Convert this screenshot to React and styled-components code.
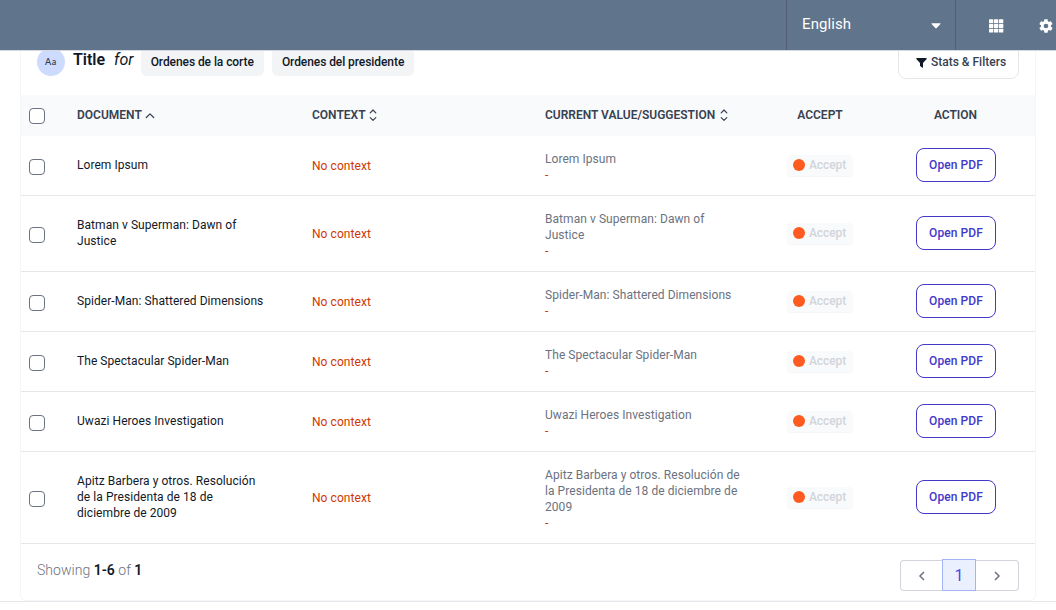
import React from "react";
import styled, { createGlobalStyle } from "styled-components";

const GlobalStyle = createGlobalStyle`
  * { box-sizing: border-box; }
  body { margin: 0; background: #fff; font-family: Roboto, "Liberation Sans", sans-serif; overflow: hidden; -webkit-font-smoothing: antialiased; }
  button { font-family: inherit; margin: 0; cursor: pointer; }
`;

const Page = styled.div`
  height: 610px;
  display: flex;
  flex-direction: column;
  overflow: hidden;
`;

const TopBar = styled.header`
  flex: none;
  height: 51px;
  display: flex;
  justify-content: flex-end;
  background: #60748b;
  border-bottom: 1px solid #d5d8de;
  color: #fff;
`;

const LanguageMenu = styled.div`
  width: 170px;
  display: flex;
  align-items: center;
  justify-content: space-between;
  padding: 0 14px 0 15px;
  border-left: 1px solid #505f73;
  border-right: 1px solid #505f73;
  font-size: 15px;
  line-height: 18px;
  letter-spacing: 0.1px;
  span { padding-bottom: 2px; }
  svg { margin-top: 2px; }
`;

const NavIcons = styled.nav`
  width: 100px;
  display: flex;
  align-items: center;
  padding: 2px 0 0 32px;
  gap: 34px;
  svg { flex: none; }
`;

const Content = styled.main`
  flex: none;
  height: 551px;
  padding: 0 20px;
  border-bottom: 1px solid #e5e7eb;
`;

const Card = styled.section`
  height: 550px;
  border: 1px solid #f5f6f7;
  border-top: 0;
  border-radius: 0 0 6px 6px;
  overflow: hidden;
`;

const CardHeader = styled.div`
  height: 44px;
  display: flex;
  align-items: flex-start;
  padding: 0 16px;
  overflow: hidden;
`;

const TypeBadge = styled.span`
  width: 28px;
  height: 28px;
  margin-top: -3px;
  border-radius: 50%;
  background: #cddbfe;
  display: grid;
  place-items: center;
`;

const Heading = styled.h1`
  margin: -3px 0 0 8px;
  font-size: 16px;
  line-height: 24px;
  font-weight: 600;
  color: #111827;
  em { font-weight: 400; margin-left: 5px; }
`;

const Tag = styled.span`
  height: 28px;
  margin: -3px 0 0 ${(p) => p.$gap}px;
  padding: 6px 10px;
  border-radius: 6px;
  background: #f3f4f6;
  color: #111827;
  font-size: 12px;
  line-height: 16px;
  font-weight: 500;
  letter-spacing: -0.07px;
`;

const FilterButton = styled.button`
  height: 36px;
  width: 121px;
  margin: -8px 0 0 auto;
  display: flex;
  align-items: center;
  justify-content: center;
  gap: 4px;
  padding: 2px 0 0 5px;
  border: 1px solid #e5e7eb;
  border-radius: 8px;
  background: #fff;
  color: #374151;
  font-size: 12px;
  font-weight: 500;
  svg { margin-top: 2px; }
`;

const Row = styled.div`
  display: grid;
  grid-template-columns: 56px 235px 233px 232px 84px 174px;
  border-bottom: 1px solid #e5e7eb;
`;

const HeadRow = styled(Row)`
  height: 41px;
  align-items: center;
  border: 0;
  background: #f9fafb;
  color: #374151;
  font-size: 12px;
  line-height: 16px;
  font-weight: 600;
`;

const HeadCell = styled.div`
  display: flex;
  align-items: center;
  justify-content: ${(p) => (p.$center ? "center" : "flex-start")};
  gap: ${(p) => p.$gap || 3}px;
  padding: 0 0 1px ${(p) => p.$left || 0}px;
`;

const Cell = styled.div`
  display: flex;
  align-items: center;
  justify-content: ${(p) => (p.$center ? "center" : "flex-start")};
  padding: ${(p) => p.$top || 0}px 0 ${(p) => p.$bottom || 0}px ${(p) => p.$left || 0}px;
  font-size: 12px;
  line-height: 16px;
  letter-spacing: 0.06px;
`;

const Checkbox = styled.input.attrs({ type: "checkbox" })`
  appearance: none;
  width: 16px;
  height: 16px;
  margin: 0;
  border: 1px solid #6b7280;
  border-radius: 4px;
  background: #fff;
`;

const DocumentName = styled.span`
  width: 188px;
  color: #111827;
`;

const NoContext = styled.span`
  color: #d03801;
`;

const Values = styled.div`
  width: 198px;
  padding: 15px 0 12px;
  font-size: 12px;
  line-height: 16px;
  letter-spacing: 0.06px;
  color: #6b7280;
`;

const Suggestion = styled.div`
  color: #d03801;
`;

const AcceptButton = styled.button`
  width: 66px;
  height: 21px;
  display: flex;
  align-items: center;
  gap: 4px;
  padding: 0 6px;
  border: 0;
  border-radius: 4px;
  background: #f9fafb;
  box-shadow: 0 1px 1px rgba(0, 0, 0, 0.04);
  color: #d1d5db;
  font-size: 12px;
  font-weight: 500;
  letter-spacing: -0.1px;
`;

const StatusDot = styled.i`
  flex: none;
  width: 12px;
  height: 12px;
  border-radius: 50%;
  background: #ff5a1f;
`;

const PdfButton = styled.button`
  width: 80px;
  height: 34px;
  padding: 0;
  border: 1px solid #4338ca;
  border-radius: 8px;
  background: #fff;
  color: #4338ca;
  font-size: 12px;
  line-height: 16px;
  font-weight: 500;
  letter-spacing: 0.08px;
`;

const Footer = styled.footer`
  display: flex;
  justify-content: space-between;
  padding: 16px;
`;

const Summary = styled.p`
  margin: 0;
  font-size: 14px;
  line-height: 20px;
  font-weight: 300;
  letter-spacing: 0.03px;
  color: #6b7280;
  b { font-weight: 600; color: #111827; }
`;

const Pager = styled.nav`
  display: flex;
  align-items: flex-end;
  height: 31px;
`;

const PageButton = styled.button`
  width: ${(p) => (p.$active ? 34 : p.$first ? 42 : 43)}px;
  height: ${(p) => (p.$active ? 32 : 31)}px;
  display: grid;
  place-items: center;
  padding: 0;
  border: 1px solid ${(p) => (p.$active ? "#a4b3f6" : "#d1d5db")};
  border-left-width: ${(p) => (p.$last ? 0 : 1)}px;
  border-right-width: ${(p) => (p.$first ? 0 : 1)}px;
  border-radius: ${(p) => (p.$first ? "4px 0 0 4px" : p.$last ? "0 4px 4px 0" : "0")};
  background: ${(p) => (p.$active ? "#ebf0ff" : "#fff")};
  color: ${(p) => (p.$active ? "#4f46e5" : "#6b7280")};
  font-size: 16px;
`;

const SortIcon = ({ both }) =>
  both ? (
    <svg width="10" height="14" viewBox="0 0 10 14" fill="none" stroke="currentColor" strokeWidth="1.2" strokeLinecap="round" strokeLinejoin="round">
      <path d="M2.2 4.8 5 2l2.8 2.8M2.2 9.6 5 12.4l2.8-2.8" />
    </svg>
  ) : (
    <svg width="10" height="10" viewBox="0 0 10 10" fill="none" stroke="currentColor" strokeWidth="1.2" strokeLinecap="round" strokeLinejoin="round">
      <path d="M1.3 7.5 5 3.8l3.7 3.7" />
    </svg>
  );

const BadgeText = styled.span`
  font-size: 9px;
  line-height: 10px;
  font-weight: 600;
  font-family: Lato, Roboto, sans-serif;
  letter-spacing: 0.6px;
  color: #374151;
`;

const Chevron = ({ right }) => (
  <svg width="10" height="12" viewBox="0 0 10 12" fill="none" stroke="currentColor" strokeWidth="1.5">
    <path d={right ? "M3 2l4 4-4 4" : "M7 2 3 6l4 4"} />
  </svg>
);

const documents = [
  "Lorem Ipsum",
  "Batman v Superman: Dawn of Justice",
  "Spider-Man: Shattered Dimensions",
  "The Spectacular Spider-Man",
  "Uwazi Heroes Investigation",
  "Apitz Barbera y otros. Resolución de la Presidenta de 18 de diciembre de 2009",
];

export default function App() {
  return (
    <Page>
      <GlobalStyle />
      <TopBar>
        <LanguageMenu>
          <span>English</span>
          <svg width="10" height="6" viewBox="0 0 10 6"><path d="M1 .3h8q.9 0 .4.7L5.7 5.1q-.7.7-1.4 0L.6 1Q.1.3 1 .3Z" fill="#fff" /></svg>
        </LanguageMenu>
        <NavIcons>
          <svg width="16" height="14" viewBox="0 0 16 14" fill="#fff">
            {[0, 4.7, 9.4].map((y) => [1, 6, 11].map((x) => <rect key={`${x}-${y}`} x={x} y={y + 0.3} width="4.3" height="3.9" rx=".5" />))}
          </svg>
          <svg width="16" height="16" viewBox="0 0 24 24" fill="#fff">
            <path d="M19.4 13c0-.3.1-.6.1-1s0-.7-.1-1l2.1-1.7c.2-.2.3-.4.1-.7l-2-3.400c-.1-.2-.4-.3-.6-.2l-2.500 1c-.5-.4-1.100-.7-1.700-1L14.400 2.400c0-.2-.2-.4-.5-.4h-4c-.2 0-.4.2-.5.4L9.100 5c-.6.300-1.200.6-1.700 1L4.900 5c-.2-.1-.5 0-.6.2l-2 3.400c-.1.2-.1.5.1.7L4.500 11c0 .3-.1.600-.1 1s0 .7.1 1l-2.100 1.700c-.2.200-.2.400-.1.700l2 3.400c.1.200.4.300.6.200l2.500-1c.5.400 1.100.7 1.700 1l.4 2.600c0 .2.200.4.500.4h4c.2 0 .4-.2.5-.4l.4-2.600c.6-.300 1.200-.6 1.700-1l2.500 1c.2.100.5 0 .6-.2l2-3.400c.1-.2.1-.5-.1-.7L19.400 13ZM12 15.500a3.500 3.500 0 1 1 0-7 3.500 3.500 0 0 1 0 7Z" />
          </svg>
        </NavIcons>
      </TopBar>
      <Content>
        <Card>
          <CardHeader>
            <TypeBadge><BadgeText>Aa</BadgeText></TypeBadge>
            <Heading>Title <em>for</em></Heading>
            <Tag $gap={7}>Ordenes de la corte</Tag>
            <Tag $gap={8}>Ordenes del presidente</Tag>
            <FilterButton>
              <svg width="11" height="10" viewBox="0 0 11 10" fill="#111827"><path d="M1 0h9q1 0 .7 1L7 5v5L4 8V5L.3 1Q0 0 1 0Z" /></svg>
              Stats &amp; Filters
            </FilterButton>
          </CardHeader>
          <HeadRow>
            <Cell $top={1} $left={8}><Checkbox aria-label="Select all" /></Cell>
            <HeadCell>DOCUMENT<SortIcon /></HeadCell>
            <HeadCell $gap={2}>CONTEXT<SortIcon both /></HeadCell>
            <HeadCell $gap={4}>CURRENT VALUE/SUGGESTION<SortIcon both /></HeadCell>
            <HeadCell $center $left={2}>ACCEPT</HeadCell>
            <HeadCell $center $left={15}>ACTION</HeadCell>
          </HeadRow>
          {documents.map((name) => (
            <Row key={name}>
              <Cell $top={3} $left={8}><Checkbox aria-label={name} /></Cell>
              <Cell $bottom={1}><DocumentName>{name}</DocumentName></Cell>
              <Cell $top={1}><NoContext>No context</NoContext></Cell>
              <Values>{name}<Suggestion>-</Suggestion></Values>
              <Cell $center $bottom={1} $left={2}><AcceptButton disabled><StatusDot />Accept</AcceptButton></Cell>
              <Cell $center $bottom={1} $left={16}><PdfButton>Open PDF</PdfButton></Cell>
            </Row>
          ))}
          <Footer>
            <Summary>Showing <b>1-6</b> of <b>1</b></Summary>
            <Pager>
              <PageButton $first aria-label="Previous"><Chevron /></PageButton>
              <PageButton $active>1</PageButton>
              <PageButton $last aria-label="Next"><Chevron right /></PageButton>
            </Pager>
          </Footer>
        </Card>
      </Content>
    </Page>
  );
}
